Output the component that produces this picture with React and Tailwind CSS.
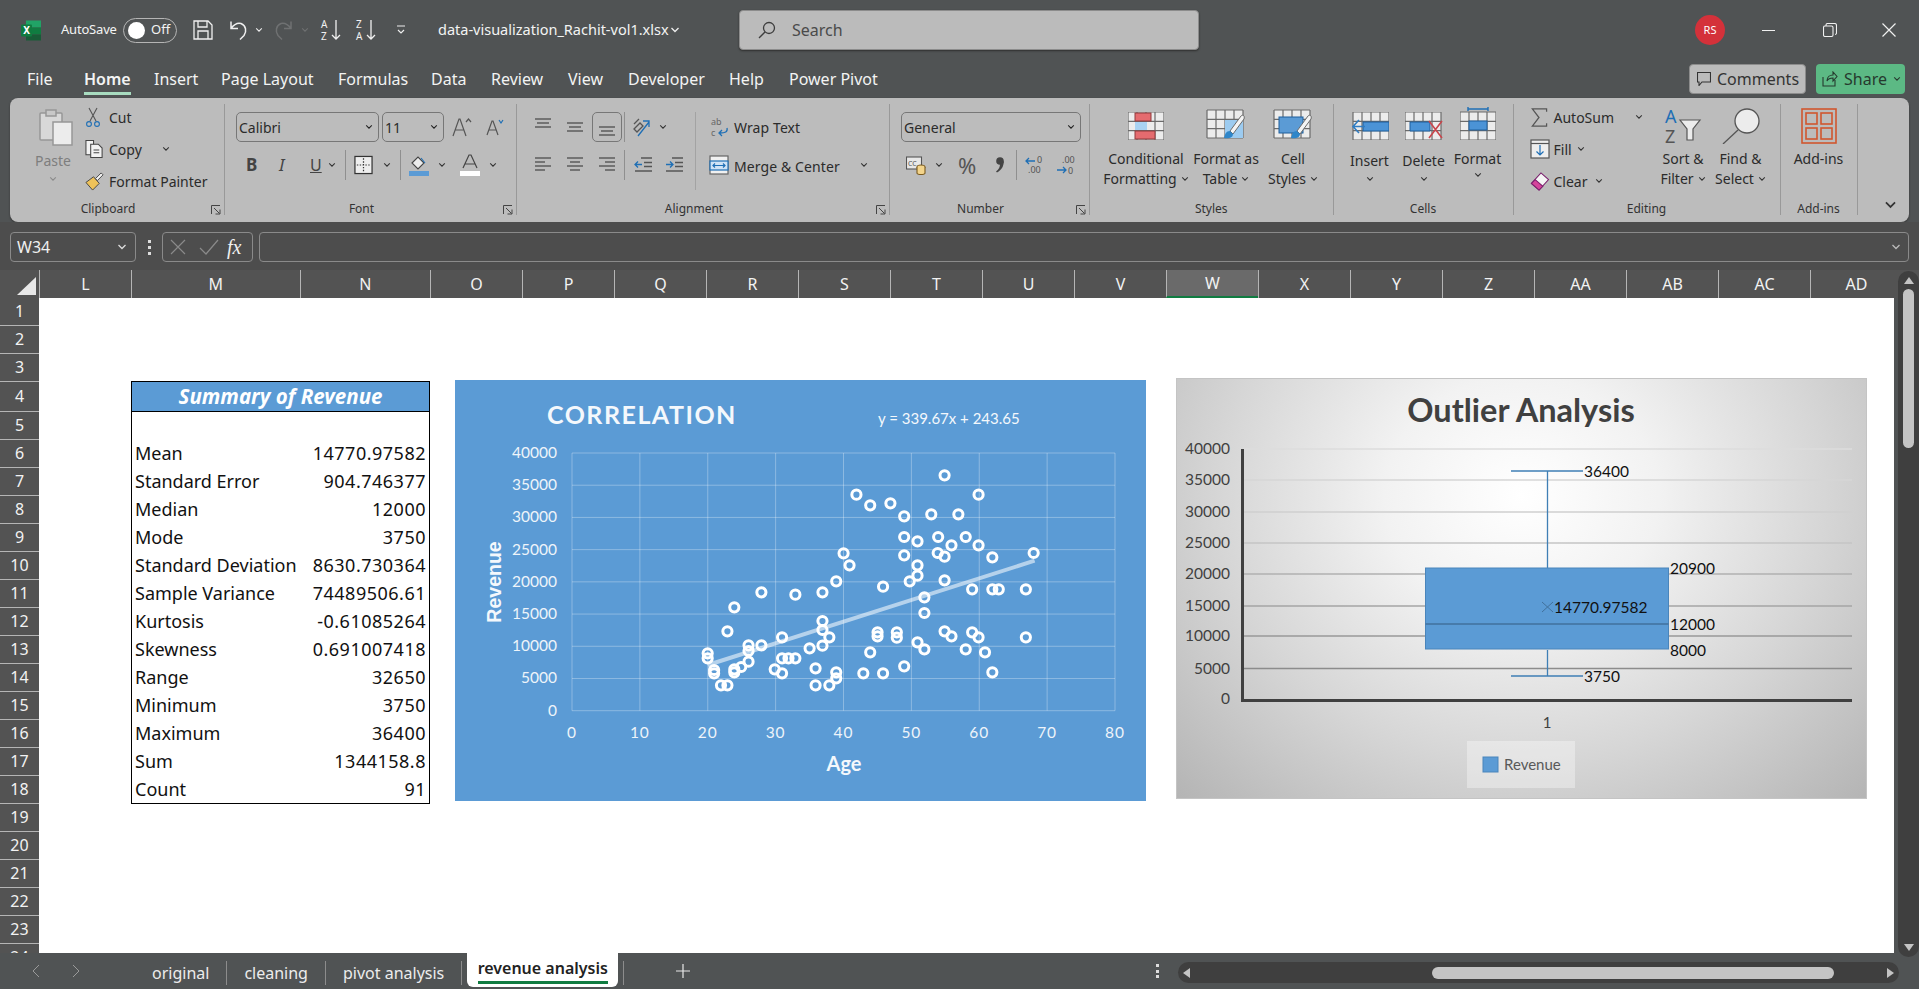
import React from "react";
import clsx from "clsx";

const COLUMNS = [
  ["L", "w-[92px]"], ["M", "w-[168.5px]"], ["N", "w-[130.5px]"], ["O", "w-[92px]"], ["P", "w-[92px]"], ["Q", "w-[92px]"],
  ["R", "w-[92px]"], ["S", "w-[92px]"], ["T", "w-[92px]"], ["U", "w-[92px]"], ["V", "w-[92px]"], ["W", "w-[92px]"],
  ["X", "w-[92px]"], ["Y", "w-[92px]"], ["Z", "w-[92px]"], ["AA", "w-[92px]"], ["AB", "w-[92px]"], ["AC", "w-[92px]"], ["AD", "w-[92px]"],
];
const STATS = [
  ["Mean", "14770.97582"], ["Standard Error", "904.746377"], ["Median", "12000"], ["Mode", "3750"],
  ["Standard Deviation", "8630.730364"], ["Sample Variance", "74489506.61"], ["Kurtosis", "-0.61085264"],
  ["Skewness", "0.691007418"], ["Range", "32650"], ["Minimum", "3750"], ["Maximum", "36400"], ["Sum", "1344158.8"], ["Count", "91"],
];
const TABS = [
  ["File", "w-[57px]"], ["Home", "w-[70px]"], ["Insert", "w-[67px]"], ["Page Layout", "w-[117px]"], ["Formulas", "w-[93px]"], ["Data", "w-[60px]"],
  ["Review", "w-[77px]"], ["View", "w-[60px]"], ["Developer", "w-[101px]"], ["Help", "w-[60px]"], ["Power Pivot", "w-[92px]"],
];
// marker positions read off the reference, in zoomed coordinates
const POINTS = [
  [1099,316],[907,374],[1173,374],[937,406],[981,400],[1011,439],[1070,433],[1129,433],[1011,501],[1040,514],[1085,501],[1145,501],
  [1114,526],[1173,526],[879,550],[892,586],[1011,556],[1084,549],[1099,560],[1203,562],[1293,549],[1040,586],[1040,617],[1023,634],
  [1099,631],[863,634],[965,650],[700,667],[774,674],[833,667],[1159,658],[1203,658],[1217,658],[1276,658],[1055,682],[641,712],
  [1055,729],[833,753],[833,780],[626,784],[953,787],[995,787],[953,799],[995,803],[1099,784],[1159,787],[1114,799],[1173,802],
  [1276,802],[745,802],[848,802],[672,826],[700,826],[833,827],[1040,817],[805,835],[672,843],[1055,838],[1145,838],[937,847],
  [1187,847],[583,850],[583,865],[745,865],[759,865],[774,865],[672,875],[1011,889],[656,891],[597,900],[641,898],[729,898],
  [818,895],[641,907],[597,910],[745,910],[863,907],[922,910],[965,910],[1203,907],[863,925],[612,946],[626,946],[818,946],[848,946],
];

function Chev({ className, color = "#333" }) {
  return (
    <svg viewBox="0 0 10 6" className={clsx("h-[6px] w-[10px] shrink-0", className)} fill="none" stroke={color} strokeWidth="1.3">
      <path d="M1.5 1 5 4.5 8.5 1" />
    </svg>
  );
}

function GridLines({ x = 0, y = 0, w = 36, h = 28, cols = 4, rows = 3, fill = "#ececec" }) {
  const xs = Array.from({ length: cols + 1 }, (_, i) => x + (w * i) / cols);
  const ys = Array.from({ length: rows + 1 }, (_, i) => y + (h * i) / rows);
  return (
    <g>
      <rect x={x} y={y} width={w} height={h} fill={fill} />
      {xs.map((v) => <line key={"x" + v} x1={v} x2={v} y1={y} y2={y + h} stroke="#6b6b6b" strokeWidth="1.2" />)}
      {ys.map((v) => <line key={"y" + v} x1={x} x2={x + w} y1={v} y2={v} stroke="#6b6b6b" strokeWidth="1.2" />)}
    </g>
  );
}

function Brush({ dx = 0, dy = 0 }) {
  return (
    <g transform={`translate(${dx} ${dy})`}>
      <path d="M22 2 11 17l3 3L25 5c1-3-1-5-3-3Z" fill="#f4f4f4" stroke="#6b6b6b" />
      <path d="M11 17c-4 0-5 3-6 7 4 1 9 0 9-4Z" fill="#2f86c9" />
    </g>
  );
}

function Lines({ rows, className }) {
  return (
    <svg viewBox="0 0 18 20" className={clsx("h-[20px] w-[18px] shrink-0", className)} stroke="#555" strokeWidth="1.4">
      {rows.map(([y, a, b]) => <line key={y} x1={a} x2={b} y1={y} y2={y} />)}
    </svg>
  );
}

function Launcher() {
  return (
    <svg viewBox="0 0 10 10" className="absolute bottom-0 right-[3px] h-[10px] w-[10px]" fill="none" stroke="#444" strokeWidth="1">
      <path d="M.5 9V.5H9M3 3l5.5 5.5M9 4.5V9H4.5" />
    </svg>
  );
}

function Group({ className, bodyClass, label, launcher, children }) {
  return (
    <div className={clsx("relative h-[111px] shrink-0 border-r border-[#999]", className)}>
      <div className={clsx("h-[93px]", bodyClass)}>{children}</div>
      <div className={clsx("h-[24px] text-center text-[12px] leading-[24px] text-[#333]", launcher && "pr-[18px]")}>{label}</div>
      {launcher && <Launcher />}
    </div>
  );
}

function Sep({ className }) {
  return <div className={clsx("h-[30px] w-px shrink-0 bg-[#8f8f8f]", className)} />;
}

function Select({ className, text }) {
  return (
    <div className={clsx("flex h-[30px] shrink-0 items-center justify-between rounded-[5px] border border-[#777] pl-[2px] pr-[5px] text-[14px]", className)}>
      <span>{text}</span>
      <Chev className="!w-[8px]" color="#222" />
    </div>
  );
}

function SmallRow({ icon, text, children }) {
  return (
    <div className="flex h-[32px] items-center">
      <div className="flex w-[24px] shrink-0 items-center">{icon}</div>
      <span>{text}</span>
      {children}
    </div>
  );
}

function BigButton({ className, icon, line1, line2, iconClass = "h-[28px] mt-[8px] mb-[9px]" }) {
  return (
    <div className={clsx("flex shrink-0 flex-col items-center whitespace-nowrap leading-[20px]", className)}>
      <div className={clsx("flex items-end", iconClass)}>{icon}</div>
      <div>{line1}</div>
      <div className="flex h-[20px] items-center gap-[4px]">{line2}<Chev className="!w-[8px]" /></div>
    </div>
  );
}

function TitleBar() {
  return (
    <div className="flex h-[60px] items-center text-[#f3f3f3]">
      <svg viewBox="0 0 20 20" className="ml-[21px] h-[21px] w-[20px]">
        <rect x="5" y="0" width="15" height="7" fill="#21a366" />
        <rect x="5" y="7" width="15" height="7" fill="#107c41" />
        <rect x="5" y="14" width="15" height="6" fill="#185c37" />
        <rect x="0" y="4" width="11" height="12" rx="1" fill="#0f7b40" />
        <text x="5.5" y="13.5" fontSize="10" fontWeight="700" textAnchor="middle" fill="#fff">X</text>
      </svg>
      <span className="ml-[20px] w-[62px] text-[13px] tracking-[-0.2px]">AutoSave</span>
      <div className="flex h-[25px] w-[54px] items-center rounded-full border border-[#b5b5b5] pl-[4px] text-[13px]">
        <div className="h-[17px] w-[17px] rounded-full bg-white" />
        <span className="ml-[6px]">Off</span>
      </div>
      <svg viewBox="0 0 20 20" className="ml-[16px] h-[20px] w-[20px]" fill="none" stroke="#f0f0f0" strokeWidth="1.3">
        <path d="M1 1h14l4 4v14H1ZM5 1v6h9V1M5 19v-8h10v8" />
      </svg>
      <svg viewBox="0 0 20 20" className="ml-[16px] h-[21px] w-[20px]" fill="none" stroke="#f0f0f0" strokeWidth="1.5">
        <path d="M2 1v7h7M2 8c3-4 6-6 10-5 5 2 6 8 3 12l-4 4" />
      </svg>
      <Chev className="ml-[6px] !w-[8px]" color="#eee" />
      <svg viewBox="0 0 20 20" className="ml-[10px] h-[21px] w-[20px]" fill="none" stroke="#6f7172" strokeWidth="1.5">
        <path d="M18 1v7h-7M18 8c-3-4-6-6-10-5-5 2-6 8-3 12l4 4" />
      </svg>
      <Chev className="ml-[8px] !w-[8px]" color="#6f7172" />
      <svg viewBox="0 0 22 22" className="ml-[12px] h-[22px] w-[22px] overflow-visible" fill="none" stroke="#f0f0f0" strokeWidth="1.3">
        <text x="0" y="9" fontSize="10" fill="#f0f0f0" stroke="none">A</text>
        <text x="0" y="21" fontSize="10" fill="#f0f0f0" stroke="none">Z</text>
        <path d="M15 1v19M11 16l4 4 4-4" />
      </svg>
      <svg viewBox="0 0 22 22" className="ml-[13px] h-[22px] w-[22px] overflow-visible" fill="none" stroke="#f0f0f0" strokeWidth="1.3">
        <text x="0" y="9" fontSize="10" fill="#f0f0f0" stroke="none">Z</text>
        <text x="0" y="21" fontSize="10" fill="#f0f0f0" stroke="none">A</text>
        <path d="M15 1v19M11 16l4 4 4-4" />
      </svg>
      <svg viewBox="0 0 10 10" className="ml-[18px] h-[10px] w-[10px]" fill="none" stroke="#eee" strokeWidth="1.2">
        <path d="M1 1h8M2 5l3 3 3-3" />
      </svg>
      <span className="ml-[32px] w-[231px] whitespace-nowrap text-[14.500px]">data-visualization_Rachit-vol1.xlsx</span>
      <Chev className="!w-[12px]" color="#eee" />
      <div className="ml-[58px] flex h-[40px] w-[460px] items-center rounded-[4px] border border-[#8c8c8c] bg-[#bbbbbb] pl-[18px] text-[16px] text-[#4a4a4a] shadow-[0_1px_2px_#2f2f2f]">
        <svg viewBox="0 0 18 18" className="h-[18px] w-[18px]" fill="none" stroke="#3d3d3d" strokeWidth="1.3">
          <circle cx="11" cy="7" r="5.5" /><path d="M7 11l-6 6" />
        </svg>
        <span className="ml-[16px]">Search</span>
      </div>
      <div className="ml-[496px] flex h-[30px] w-[30px] items-center justify-center rounded-full bg-[#d4313a] text-[11px] text-white">RS</div>
      <div className="ml-[37px] h-px w-[13px] bg-[#f0f0f0]" />
      <svg viewBox="0 0 14 14" className="ml-[48px] h-[14px] w-[14px]" fill="none" stroke="#f0f0f0" strokeWidth="1.1">
        <rect x=".5" y="3" width="9.5" height="10.5" rx="1.5" /><path d="M3 3V2c0-1 .5-1.5 1.5-1.5h7c1 0 2 1 2 2V10c0 1-.5 1.5-1.5 1.5" />
      </svg>
      <svg viewBox="0 0 14 14" className="ml-[45px] h-[14px] w-[14px]" fill="none" stroke="#f0f0f0" strokeWidth="1.2">
        <path d="M.5.5l13 13M13.5.5l-13 13" />
      </svg>
    </div>
  );
}

function TabRow() {
  return (
    <div className="flex h-[38px] items-center pl-[27px] text-[16px] text-[#f3f3f3]">
      <div className="flex">
        {TABS.map(([t, width]) => (
          <div key={t} className={clsx("whitespace-nowrap", width, t === "Home" && "font-semibold")}>
            <span className="relative inline-block">
              {t}
              {t === "Home" && <span className="absolute bottom-[-4px] left-0 h-[3px] w-full bg-[#a8dcc0]" />}
            </span>
          </div>
        ))}
      </div>
      <div className="ml-auto flex items-center gap-[10px] pr-[14px]">
        <div className="flex h-[30px] w-[117px] items-center rounded-[4px] border border-[#8c8c8c] bg-[#bbbbbb] pl-[7px] text-[#333]">
          <svg viewBox="0 0 14 14" className="h-[14px] w-[14px]" fill="none" stroke="#333" strokeWidth="1.1">
            <path d="M.5.5h13v9.5H5L2 13.5V10H.5Z" />
          </svg>
          <span className="ml-[6px]">Comments</span>
        </div>
        <div className="flex h-[30px] w-[89px] items-center rounded-[4px] bg-[#5cb984] pl-[6px] text-[#263a2e]">
          <svg viewBox="0 0 16 16" className="h-[16px] w-[16px]" fill="none" stroke="#263a2e" strokeWidth="1.1">
            <path d="M1 6v9h12V9M5 10c0-4 3-6 6-6V1l4 4.5L11 10V7c-3 0-5 1-6 3Z" />
          </svg>
          <span className="ml-[6px]">Share</span>
          <Chev className="ml-[6px] !w-[8px]" color="#263a2e" />
        </div>
      </div>
    </div>
  );
}

function Clipboard() {
  return (
    <Group className="w-[215px]" label="Clipboard" launcher>
      <div className="flex">
        <div className="ml-[17px] flex w-[58px] flex-col items-center text-[#7e7e7e]">
          <svg viewBox="0 0 34 38" className="mt-[4px] h-[38px] w-[34px]" fill="#d8d8d8" stroke="#979797" strokeWidth="1.5">
            <rect x="1" y="5" width="22" height="27" rx="1" />
            <rect x="7" y="2" width="10" height="6" fill="#c8c8c8" />
            <rect x="14" y="14" width="19" height="23" fill="#ececec" />
          </svg>
          <span className="mt-[5px] pr-[6px] leading-[20px]">Paste</span>
          <Chev className="mr-[6px] mt-[5px] !w-[8px]" color="#8a8a8a" />
        </div>
        <div className="-mt-[3px] text-[#2b2b2b]">
          <SmallRow text="Cut" icon={
            <svg viewBox="0 0 16 20" className="h-[20px] w-[16px]" fill="none" stroke="#555" strokeWidth="1.1">
              <path d="M4 1l7 13M12 1L5 14" /><circle cx="4" cy="17" r="2.4" stroke="#1f6fb5" /><circle cx="12" cy="17" r="2.4" stroke="#1f6fb5" />
            </svg>} />
          <SmallRow text="Copy" icon={
            <svg viewBox="0 0 20 20" className="h-[20px] w-[19px]" fill="#f2f2f2" stroke="#444" strokeWidth="1.1">
              <path d="M1 1h8v15H1Z" /><path d="M6 5h8l4 4v10H6Z" /><path d="M9 11h6M9 14h6" />
            </svg>}>
            <Chev className="ml-[20px] !w-[8px]" />
          </SmallRow>
          <SmallRow text="Format Painter" icon={
            <svg viewBox="0 0 20 20" className="h-[19px] w-[19px]" stroke="#444" strokeWidth="1">
              <path d="M1 11 9 5l6 7-7 7Z" fill="#eec25a" /><path d="M11 7l6-6 2 2-6 6Z" fill="#f5f5f5" />
            </svg>} />
        </div>
      </div>
    </Group>
  );
}

function FontGroup() {
  return (
    <Group className="w-[292px]" bodyClass="pl-[11px] pt-[8px]" label="Font" launcher>
      <div className="flex h-[30px] items-center">
        <Select className="w-[143px]" text="Calibri" />
        <Select className="ml-[3px] w-[62px]" text="11" />
        <svg viewBox="0 0 20 20" className="ml-[8px] h-[20px] w-[20px]" fill="none" stroke="#555" strokeWidth="1.2">
          <path d="M1 19 7 2h1l6 17M3.5 13h8M14 5l2.500-3L19 5" />
        </svg>
        <svg viewBox="0 0 18 18" className="ml-[14px] h-[18px] w-[18px]" fill="none" stroke="#555" strokeWidth="1.2">
          <path d="M1 17 6 3h1l5 14M3 12h7" /><path d="M13 2l2 3 2-3" stroke="#1f6fb5" />
        </svg>
      </div>
      <div className="mt-[8px] flex h-[30px] items-center text-[#444]">
        <span className="ml-[10px] w-[16px] text-[17px] font-bold">B</span>
        <span className="ml-[17px] w-[10px] text-[17px] italic">I</span>
        <span className="ml-[21px] w-[12px] text-[16px] underline">U</span>
        <Chev className="ml-[6px] !w-[8px]" />
        <Sep className="ml-[9px]" />
        <svg viewBox="0 0 20 20" className="ml-[8px] h-[20px] w-[19px]" fill="#eee" stroke="#333" strokeWidth="1.3">
          <rect x="1" y="1" width="18" height="18" /><path d="M10 3v14M3 10h14" strokeDasharray="1.5 1.5" />
        </svg>
        <Chev className="ml-[10px] !w-[8px]" />
        <Sep className="ml-[9px]" />
        <svg viewBox="0 0 20 22" className="ml-[8px] h-[22px] w-[20px]" stroke="#444" strokeWidth="1.1">
          <path d="M3 9l6-6 6 6-6 6Z" fill="#ececec" /><path d="M12 4l4 5" stroke="#1f6fb5" /><rect x="0" y="17" width="20" height="5" fill="#5b9bd5" stroke="none" />
        </svg>
        <Chev className="ml-[9px] !w-[8px]" />
        <svg viewBox="0 0 20 22" className="ml-[14px] h-[22px] w-[20px]" fill="none" stroke="#444" strokeWidth="1.2">
          <path d="M3 14 9 1h2l6 13M5 10h10" /><rect x="0" y="17" width="20" height="5" fill="#fff" stroke="none" />
        </svg>
        <Chev className="ml-[9px] !w-[8px]" />
      </div>
    </Group>
  );
}

function AlignmentGroup() {
  return (
    <Group className="w-[373px]" bodyClass="pl-[17px] pt-[8px]" label="Alignment" launcher>
      <div className="flex h-[30px] items-center">
        <Lines rows={[[4, 1, 17], [8, 3, 15], [12, 1, 17]]} className="-mt-[4px]" />
        <Lines rows={[[8, 1, 17], [12, 3, 15], [16, 1, 17]]} className="ml-[14px] -mt-[4px]" />
        <div className="ml-[8px] flex h-[30px] w-[30px] items-center justify-center rounded-[5px] border border-[#777]">
          <Lines rows={[[10, 1, 17], [14, 3, 15], [18, 1, 17]]} />
        </div>
        <Sep className="ml-[2px]" />
        <svg viewBox="0 0 20 20" className="ml-[6px] h-[20px] w-[20px]" fill="none" strokeWidth="1.3">
          <path d="M3 12l6-6 3 3-6 6ZM8 2l-5 5" stroke="#555" /><path d="M7 19 18 5M12 4h6v6" stroke="#1f6fb5" />
        </svg>
        <Chev className="ml-[8px] !w-[8px]" />
        <Sep className="ml-[28px] !h-[78px] self-start bg-[#a3a3a3]" />
        <svg viewBox="0 0 18 20" className="ml-[15px] h-[20px] w-[18px] overflow-visible" fill="none" stroke="#1f6fb5" strokeWidth="1.3">
          <text x="0" y="8" fontSize="9" fill="#666" stroke="none">ab</text>
          <text x="0" y="19" fontSize="9" fill="#666" stroke="none">c</text>
          <path d="M16 11c1 4-2 5-7 5M11 13l-3 3 3 3" />
        </svg>
        <span className="ml-[5px] tracking-[0.1px]">Wrap Text</span>
      </div>
      <div className="mt-[8px] flex h-[30px] items-center">
        <Lines rows={[[3, 1, 17], [7, 1, 11], [11, 1, 17], [15, 1, 11]]} />
        <Lines rows={[[3, 1, 17], [7, 4, 14], [11, 1, 17], [15, 4, 14]]} className="ml-[14px]" />
        <Lines rows={[[3, 1, 17], [7, 7, 17], [11, 1, 17], [15, 7, 17]]} className="ml-[14px]" />
        <Sep className="ml-[8px]" />
        <svg viewBox="0 0 18 20" className="ml-[9px] h-[20px] w-[18px]" fill="none" stroke="#555" strokeWidth="1.3">
          <path d="M7 3h11M10 7.500h8M10 11.500h8M1 16h17" /><path d="M1 9.500h7M4 6.500l-3 3 3 3" stroke="#1f6fb5" />
        </svg>
        <svg viewBox="0 0 18 20" className="ml-[13px] h-[20px] w-[18px]" fill="none" stroke="#555" strokeWidth="1.3">
          <path d="M7 3h11M10 7.500h8M10 11.500h8M1 16h17" /><path d="M1 9.500h7M5 6.500l3 3-3 3" stroke="#1f6fb5" />
        </svg>
        <div className="ml-[13px] w-px" />
        <svg viewBox="0 0 20 20" className="ml-[12px] h-[20px] w-[20px]" fill="#f1f1f1" stroke="#666" strokeWidth="1.2">
          <rect x="1" y="1" width="18" height="18" /><rect x="1" y="6" width="18" height="9" fill="#cfe3f6" stroke="#1f6fb5" /><path d="M4 10.500h12M6 8.500l-2 2 2 2M14 8.500l2 2-2 2" fill="none" stroke="#1f6fb5" />
        </svg>
        <span className="ml-[5px] mt-[2px] w-[126px] whitespace-nowrap tracking-[0.1px]">Merge &amp; Center</span>
        <Chev className="!w-[8px]" />
      </div>
    </Group>
  );
}

function NumberGroup() {
  return (
    <Group className="w-[200px]" bodyClass="pl-[11px] pt-[8px]" label="Number" launcher>
      <Select className="w-[180px]" text="General" />
      <div className="mt-[8px] flex h-[30px] items-center pl-[5px]">
        <svg viewBox="0 0 20 20" className="h-[20px] w-[20px]" fill="#e8e8e8" stroke="#555" strokeWidth="1.1">
          <rect x="0.500" y="2" width="15" height="12" /><text x="2" y="11" fontSize="7" fill="#555" stroke="none">CC</text><ellipse cx="15" cy="12" rx="4" ry="2" fill="#f3d48b" stroke="#7a5a1e" /><path d="M11 12v6c0 2 8 2 8 0v-6" fill="#f3d48b" stroke="#7a5a1e" />
        </svg>
        <Chev className="ml-[9px] !w-[8px]" />
        <span className="ml-[15px] w-[18px] text-[22px] leading-none text-[#555]">%</span>
        <svg viewBox="0 0 9 16" className="ml-[19px] h-[16px] w-[9px]" fill="#444">
          <circle cx="5" cy="4" r="3.8" /><path d="M8.800 4c0 5-2 9-6.800 11.500L1 14.500C4 12 5 10 5 7Z" />
        </svg>
        <Sep className="ml-[12px]" />
        <svg viewBox="0 0 20 20" className="ml-[8px] h-[20px] w-[20px] overflow-visible" fill="none" stroke="#1f6fb5" strokeWidth="1.3">
          <path d="M1 6h9M4 3 1 6l3 3" />
          <text x="12" y="8" fontSize="9" fill="#555" stroke="none">0</text>
          <text x="3" y="18" fontSize="9" fill="#555" stroke="none">.00</text>
        </svg>
        <svg viewBox="0 0 20 20" className="ml-[11px] h-[20px] w-[20px] overflow-visible" fill="none" stroke="#1f6fb5" strokeWidth="1.3">
          <text x="6" y="8" fontSize="9" fill="#555" stroke="none">.00</text>
          <path d="M1 15h9M7 12l3 3-3 3" />
          <text x="12" y="19" fontSize="9" fill="#555" stroke="none">0</text>
        </svg>
      </div>
    </Group>
  );
}

function StylesGroup() {
  return (
    <Group className="w-[243.500px]" label="Styles">
      <div className="flex">
        <BigButton className="ml-[14px] w-[84px]" line1="Conditional" line2="Formatting" icon={
          <svg viewBox="0 0 36 28" className="h-[28px] w-[36px]">
            <GridLines />
            <rect x="7" y="1" width="16" height="8" fill="#e56b6f" stroke="#8f3a3d" />
            <rect x="7" y="10" width="12" height="8" fill="#a9d2f2" />
            <rect x="7" y="19" width="20" height="8" fill="#e56b6f" stroke="#8f3a3d" />
          </svg>} />
        <BigButton className="ml-[-2px] w-[80px]" line1="Format as" line2="Table" icon={
          <svg viewBox="0 0 38 30" className="h-[30px] w-[38px] overflow-visible">
            <GridLines />
            <rect x="18" y="10" width="18" height="18" fill="#9ccbf0" />
            <Brush dx={12} dy={4} />
          </svg>} />
        <BigButton className="ml-[2px] w-[50px]" line1="Cell" line2="Styles" icon={
          <svg viewBox="0 0 38 30" className="h-[30px] w-[38px] overflow-visible">
            <GridLines />
            <rect x="5" y="7" width="24" height="16" fill="#5b9bd5" stroke="#1f5f9c" />
            <Brush dx={12} dy={4} />
          </svg>} />
      </div>
    </Group>
  );
}

function CellsGroup() {
  return (
    <Group className="w-[180px]" label="Cells">
      <div className="flex pl-[9px]">
        <div className="flex w-[54px] flex-col items-center">
          <svg viewBox="0 0 38 28" className="mt-[8px] h-[28px] w-[38px]">
            <GridLines x={2} />
            <rect x="12" y="10" width="26" height="9" fill="#4b93d6" stroke="#1f5f9c" />
            <path d="M14 14.500H3M8 8l-6 6.500L8 21" fill="none" stroke="#2f7cc2" strokeWidth="1.6" />
          </svg>
          <span className="mt-[11px] leading-[20px]">Insert</span>
          <Chev className="mt-[5px] !w-[8px]" />
        </div>
        <div className="flex w-[54px] flex-col items-center">
          <svg viewBox="0 0 38 28" className="mt-[8px] h-[28px] w-[38px]">
            <GridLines />
            <path d="M5 10h20v9H5Z" fill="#4b93d6" stroke="#1f5f9c" />
            <path d="M24 9l13 17M37 9 24 26" stroke="#c9454b" strokeWidth="1.6" />
          </svg>
          <span className="mt-[11px] whitespace-nowrap leading-[20px]">Delete</span>
          <Chev className="mt-[5px] !w-[8px]" />
        </div>
        <div className="flex w-[54px] flex-col items-center">
          <svg viewBox="0 0 36 34" className="mt-[2px] h-[34px] w-[36px]">
            <path d="M8 1v4M28 1v4M8 3h20" stroke="#1f6fb5" strokeWidth="1.4" />
            <GridLines y={6} />
            <rect x="9" y="15" width="18" height="9" fill="#4b93d6" stroke="#1f5f9c" />
          </svg>
          <span className="mt-[9px] leading-[20px]">Format</span>
          <Chev className="mt-[3px] !w-[8px]" />
        </div>
      </div>
    </Group>
  );
}

function EditingGroup() {
  return (
    <Group className="w-[267px]" label="Editing">
      <div className="flex">
        <div className="-mt-[3px] ml-[16px] w-[125px]">
          <SmallRow text="AutoSum" icon={
            <svg viewBox="0 0 18 20" className="h-[19px] w-[18px]" fill="none" stroke="#555" strokeWidth="1.3">
              <path d="M17 4V1H2l7 9-7 9h15v-3" />
            </svg>}>
            <Chev className="ml-[21px] !w-[8px]" />
          </SmallRow>
          <SmallRow text="Fill" icon={
            <svg viewBox="0 0 20 20" className="h-[20px] w-[20px]" fill="#eee" stroke="#555" strokeWidth="1.2">
              <rect x="1" y="1" width="18" height="18" /><path d="M1 4.500h18" /><path d="M10 6v10M6.500 12.500 10 16l3.500-3.500" fill="none" stroke="#1f6fb5" />
            </svg>}>
            <Chev className="ml-[5px] !w-[8px]" />
          </SmallRow>
          <SmallRow text="Clear" icon={
            <svg viewBox="0 0 20 20" className="h-[19px] w-[20px]" stroke="#7a1f6d" strokeWidth="1.1">
              <path d="M1 12 11 1l8 7-10 11Z" fill="#f5f5f5" /><path d="M1 12l4-4 8 7-4 4Z" fill="#d5449b" />
            </svg>}>
            <Chev className="ml-[7px] !w-[8px]" />
          </SmallRow>
        </div>
        <BigButton className="w-[57px]" line1="Sort &amp;" line2="Filter" iconClass="h-[36px] mt-[4px] mb-[5px]" icon={
          <svg viewBox="0 0 36 36" className="h-[36px] w-[36px] overflow-visible" fill="none" stroke="#555" strokeWidth="1.2">
            <text x="0" y="15" fontSize="18" fill="#1f6fb5" stroke="none">A</text>
            <text x="0" y="35" fontSize="18" fill="#555" stroke="none">Z</text>
            <path d="M15 12h20l-7 9v11h-6V21Z" fill="#ececec" />
          </svg>} />
        <BigButton className="w-[58px]" line1="Find &amp;" line2="Select" iconClass="h-[36px] mt-[4px] mb-[5px]" icon={
          <svg viewBox="0 0 38 36" className="h-[36px] w-[38px]" fill="#ececec" stroke="#555" strokeWidth="1.3">
            <circle cx="25" cy="13" r="12" /><path d="M16 22 1 36" fill="none" />
          </svg>} />
      </div>
    </Group>
  );
}

function AddInsGroup() {
  return (
    <Group className="w-[77px]" label="Add-ins">
      <div className="flex flex-col items-center">
        <svg viewBox="0 0 36 36" className="mt-[4px] h-[36px] w-[36px]" fill="none" stroke="#d0562e" strokeWidth="1.6">
          <rect x="1" y="1" width="34" height="34" /><rect x="5" y="5" width="11" height="11" /><rect x="20" y="5" width="11" height="11" /><rect x="5" y="20" width="11" height="11" /><rect x="20" y="20" width="11" height="11" />
        </svg>
        <span className="mt-[5px] leading-[20px]">Add-ins</span>
      </div>
    </Group>
  );
}

function Ribbon() {
  return (
    <div className="mx-[10px] flex h-[124px] rounded-lg bg-[#bcbcbc] py-[6px] text-[14px] text-[#2b2b2b] shadow-[0_1px_2px_#333]">
      <Clipboard />
      <FontGroup />
      <AlignmentGroup />
      <NumberGroup />
      <StylesGroup />
      <CellsGroup />
      <EditingGroup />
      <AddInsGroup />
      <div className="flex flex-1 items-end justify-center pb-[7px] pl-[14px]">
        <Chev className="!h-[8px] !w-[13px]" />
      </div>
    </div>
  );
}

function FormulaBar() {
  return (
    <div className="flex h-[48px] items-start bg-[#4d4d4d] px-[10px] pt-[10px] text-[#f0f0f0]">
      <div className="flex h-[30px] w-[126px] items-center justify-between rounded-[4px] border border-[#8a8a8a] pl-[6px] pr-[7px] text-[16px]">
        <span>W34</span>
        <Chev className="!w-[12px]" color="#ddd" />
      </div>
      <div className="ml-[11px] flex h-[30px] w-[5px] flex-col items-center justify-center gap-[3px]">
        <div className="h-[3px] w-[3px] bg-[#ddd]" /><div className="h-[3px] w-[3px] bg-[#ddd]" /><div className="h-[3px] w-[3px] bg-[#ddd]" />
      </div>
      <div className="ml-[10px] flex h-[30px] w-[91px] items-center rounded-[4px] border border-[#8a8a8a] pl-[7px]">
        <svg viewBox="0 0 16 16" className="h-[16px] w-[16px]" fill="none" stroke="#8a8a8a" strokeWidth="1.2"><path d="M1 1l14 14M15 1 1 15" /></svg>
        <svg viewBox="0 0 20 16" className="ml-[13px] h-[16px] w-[20px]" fill="none" stroke="#8a8a8a" strokeWidth="1.2"><path d="M1 9l6 6L19 1" /></svg>
        <span className="ml-[8px] font-['Liberation_Serif'] text-[20px] italic">fx</span>
      </div>
      <div className="ml-[6px] flex h-[30px] flex-1 items-center justify-end rounded-[4px] border border-[#8a8a8a] pr-[6px]">
        <Chev className="!w-[12px]" color="#bbb" />
      </div>
    </div>
  );
}

function ColumnHeaders() {
  return (
    <div className="flex h-[27.500px] bg-[#535353] text-[16px] text-[#f2f2f2]">
      <div className="flex w-[39px] shrink-0 items-end justify-end pb-[3px] pr-[3px]">
        <div className="h-0 w-0 border-b-[18px] border-l-[19px] border-b-[#e8e8e8] border-l-transparent" />
      </div>
      {COLUMNS.map(([name, width]) => (
        <div key={name} className={clsx("flex shrink-0 items-center justify-center border-l border-[#b5b5b5]", width, name === "W" && "border-b-2 border-b-[#107c41] bg-[#6a6a6a]")}>
          {name}
        </div>
      ))}
    </div>
  );
}

function RowHeaders() {
  const rows = Array.from({ length: 24 }, (_, i) => i + 1);
  return (
    <div className="h-full w-[39px] shrink-0 overflow-hidden bg-[#535353] text-[16px] text-[#f2f2f2]">
      {rows.map((n) => (
        <div key={n} className={clsx("flex items-center justify-center border-b border-[#b5b5b5]", n === 4 ? "h-[30px]" : "h-[28px]")}>{n}</div>
      ))}
    </div>
  );
}

function SummaryTable() {
  return (
    <div className="mt-[83.500px] h-[422.500px] w-[299px] shrink-0 overflow-hidden border border-black text-[18px] text-[#111]">
      <div className="flex h-[30px] items-center justify-center border-b border-black bg-[#5b9bd5] text-[20.500px] font-bold italic text-white">
        Summary of Revenue
      </div>
      <div className="h-[27px]" />
      {STATS.map(([label, value]) => (
        <div key={label} className="flex h-[28px] items-center justify-between pl-[3px] pr-[3px]">
          <span>{label}</span>
          <span className="tracking-[0.5px]">{value}</span>
        </div>
      ))}
    </div>
  );
}

function ScatterChart() {
  const toX = (z) => z / 2.178 - 15;
  const toY = (z) => z / 3 - 10;
  const ticksY = [0, 5000, 10000, 15000, 20000, 25000, 30000, 35000, 40000];
  const ticksX = [0, 10, 20, 30, 40, 50, 60, 70, 80];
  return (
    <div className="ml-[25px] mt-[82.500px] h-[421px] w-[691px] shrink-0 bg-[#5b9bd5]">
      <svg viewBox="0 0 691 421" className="h-full w-full font-['Lato']">
        {ticksY.map((t, i) => {
          const y = 330.7 - (i * 257.7) / 8;
          return (
            <g key={t}>
              <line x1="117" x2="660" y1={y} y2={y} stroke="#fff" strokeOpacity="0.3" />
              <text x="102" y={y + 5} textAnchor="end" fontSize="15.500" fill="#eef4fa">{t}</text>
            </g>
          );
        })}
        {ticksX.map((t, i) => {
          const x = 117 + (i * 543) / 8;
          return (
            <g key={t}>
              <line x1={x} x2={x} y1="73" y2="330.700" stroke="#fff" strokeOpacity="0.3" />
              <text x={x} y="358" textAnchor="middle" fontSize="15.500" letterSpacing="1" fill="#eef4fa">{t}</text>
            </g>
          );
        })}
        <line x1="252.700" y1="285" x2="579.600" y2="180.700" stroke="#fff" strokeOpacity="0.55" strokeWidth="4" />
        {POINTS.map(([x, y], i) => (
          <circle key={i} cx={toX(x)} cy={toY(y)} r="4.600" fill="none" stroke="#fff" strokeWidth="3" />
        ))}
        <text x="92" y="44" fontSize="25" fontWeight="700" letterSpacing="1.500" fill="#f4f8fc">CORRELATION</text>
        <text x="423" y="44" fontSize="15" fill="#f4f8fc">y = 339.67x + 243.65</text>
        <text x="389" y="391" textAnchor="middle" fontSize="20" fontWeight="700" fill="#f4f8fc">Age</text>
        <text transform="translate(46 202) rotate(-90)" textAnchor="middle" fontSize="19.500" fontWeight="700" fontFamily="Liberation Sans" fill="#f4f8fc">Revenue</text>
      </svg>
    </div>
  );
}

function BoxChart() {
  const ticks = [
    [40000, 71, "#dcdcdc"], [35000, 102, "#d6d6d6"], [30000, 134, "#cfcfcf"], [25000, 165, "#c4c4c4"], [20000, 196, "#b0b0b0"],
    [15000, 228, "#a5a5a5"], [10000, 258, "#999"], [5000, 290.500, "#8c8c8c"],
  ];
  const labels = [["36400", 408, 93], ["20900", 494, 190], ["14770.97582", 378, 229], ["12000", 494, 246], ["8000", 494, 272], ["3750", 408, 298]];
  return (
    <div className="ml-[30px] mt-[80.500px] h-[421px] w-[691px] shrink-0 bg-[radial-gradient(ellipse_at_50%_28%,#ffffff_0%,#f2f2f2_28%,#d6d6d6_62%,#b4b4b4_100%)] shadow-[inset_0_0_0_1px_#c4c4c4]">
      <svg viewBox="0 0 691 421" className="h-full w-full font-['Lato']">
        <text x="345" y="44" textAnchor="middle" fontSize="32.500" fontWeight="700" fill="#404040">Outlier Analysis</text>
        {ticks.map(([t, y, c]) => (
          <g key={t}>
            <line x1="67" x2="676" y1={y} y2={y} stroke={c} strokeWidth="1.500" />
            <text x="54" y={y + 5} textAnchor="end" fontSize="15.500" fill="#404040">{t}</text>
          </g>
        ))}
        <text x="54" y="326" textAnchor="end" fontSize="15.500" fill="#404040">0</text>
        <path d="M371.500 93v97M371.500 272v26M335 93h72M335 298h72" stroke="#3f7fb5" strokeWidth="1.300" fill="none" />
        <rect x="249.500" y="190" width="243" height="81" fill="#5b9bd5" stroke="#4a85bb" />
        <line x1="249.500" x2="492.500" y1="246" y2="246" stroke="#41719c" strokeWidth="1.300" />
        <path d="M366 224l11 10M377 224l-11 10" stroke="#41719c" strokeWidth="1" />
        <path d="M66.500 71v251.500H676" stroke="#404040" strokeWidth="3" fill="none" />
        {labels.map(([t, x, y]) => (
          <text key={t} x={x} y={y + 5.500} fontSize="15.500" fill="#111">{t}</text>
        ))}
        <text x="371" y="350" textAnchor="middle" fontSize="15" fill="#404040">1</text>
        <rect x="291" y="363" width="108" height="47" fill="#fff" fillOpacity="0.35" />
        <rect x="307" y="379" width="15" height="15" fill="#5b9bd5" stroke="#4a85bb" />
        <text x="328" y="392" fontSize="15" fill="#595959">Revenue</text>
      </svg>
    </div>
  );
}

function VerticalScroll() {
  return (
    <div className="mb-[-4px] ml-[4px] mt-[-27px] flex w-[21px] shrink-0 flex-col items-center rounded-full bg-[#3f3f3f] py-[6px]">
      <div className="h-0 w-0 border-x-[5px] border-b-[7px] border-x-transparent border-b-[#c4c4c4]" />
      <div className="mt-[5px] h-[159px] w-[11px] rounded-full bg-[#c4c4c4]" />
      <div className="mt-auto h-0 w-0 border-x-[5px] border-t-[7px] border-x-transparent border-t-[#c4c4c4]" />
    </div>
  );
}

function SheetBar() {
  return (
    <div className="flex h-[36px] items-start text-[16px] text-[#ececec]">
      <svg viewBox="0 0 8 14" className="ml-[32px] mt-[11px] h-[14px] w-[8px]" fill="none" stroke="#9a9a9a"><path d="M7 1 1 7l6 6" /></svg>
      <svg viewBox="0 0 8 14" className="ml-[32px] mt-[11px] h-[14px] w-[8px]" fill="none" stroke="#9a9a9a"><path d="M1 1l6 6-6 6" /></svg>
      <div className="ml-[72px] mt-[7px] flex h-[26px] items-center">
        <span>original</span>
        <div className="ml-[17px] h-[24px] w-px bg-[#8c8c8c]" />
        <span className="ml-[17px]">cleaning</span>
        <div className="ml-[17px] h-[24px] w-px bg-[#8c8c8c]" />
        <span className="ml-[17px]">pivot analysis</span>
        <div className="ml-[17px] h-[24px] w-px bg-[#8c8c8c]" />
      </div>
      <div className="ml-[5px] flex h-[34px] w-[151px] flex-col items-center rounded-b-[6px] bg-white pt-[4px] font-semibold text-[#222]">
        <span className="leading-[22px]">revenue analysis</span>
        <div className="mt-[2px] h-[3px] w-[130px] bg-[#107c41]" />
      </div>
      <div className="ml-[5px] mt-[8px] h-[24px] w-px bg-[#8c8c8c]" />
      <svg viewBox="0 0 14 14" className="ml-[52px] mt-[11px] h-[14px] w-[14px]" fill="none" stroke="#e8e8e8" strokeWidth="1.2"><path d="M7 0v14M0 7h14" /></svg>
      <div className="ml-[465.500px] mt-[11px] flex h-[14px] w-[3px] flex-col justify-between">
        <div className="h-[3px] bg-[#ddd]" /><div className="h-[3px] bg-[#ddd]" /><div className="h-[3px] bg-[#ddd]" />
      </div>
      <div className="ml-[19px] mt-[9px] flex h-[21px] w-[721px] items-center rounded-full bg-[#3f3f3f] px-[5px]">
        <div className="h-0 w-0 border-y-[5px] border-r-[7px] border-y-transparent border-r-[#c4c4c4]" />
        <div className="ml-[242px] h-[12px] w-[402px] rounded-full bg-[#c4c4c4]" />
        <div className="ml-auto h-0 w-0 border-y-[5px] border-l-[7px] border-y-transparent border-l-[#c4c4c4]" />
      </div>
    </div>
  );
}

export default function App() {
  return (
    <div className="flex h-[989px] w-full flex-col overflow-hidden bg-[#505354] font-['Noto_Sans',sans-serif]">
      <TitleBar />
      <TabRow />
      <Ribbon />
      <FormulaBar />
      <ColumnHeaders />
      <div className="flex h-[655.500px] overflow-visible">
        <RowHeaders />
        <div className="flex w-[1855px] items-start overflow-hidden bg-white pl-[92px]">
          <SummaryTable />
          <ScatterChart />
          <BoxChart />
        </div>
        <VerticalScroll />
      </div>
      <SheetBar />
    </div>
  );
}
